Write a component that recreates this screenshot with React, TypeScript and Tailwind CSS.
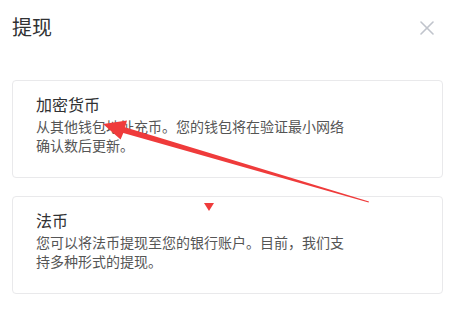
import React from "react";

// 提现方式のカード
const options = [
  {
    title: "加密货币",
    desc: "从其他钱包地址充币。您的钱包将在验证最小网络确认数后更新。",
  },
  {
    title: "法币",
    desc: "您可以将法币提现至您的银行账户。目前，我们支持多种形式的提现。",
  },
];

export default function App() {
  return (
    <div
      className="relative w-[450px] h-[332px] bg-white overflow-hidden"
      style={{ fontFamily: '"Noto Sans CJK SC", "Noto Sans", sans-serif' }}
    >
      {/* ヘッダー */}
      <div className="flex items-center justify-between pl-3 pr-[16px] pt-[13px] h-[41px]">
        <h1 className="text-[20px] leading-[28px] text-[#303133] font-normal">提现</h1>
        <button className="w-[14px] h-[14px] mt-[1px]">
          <svg viewBox="0 0 14 14" className="w-[14px] h-[14px]" stroke="#c0c4cc" strokeWidth="1.6" strokeLinecap="round">
            <line x1="1" y1="1" x2="13" y2="13" />
            <line x1="13" y1="1" x2="1" y2="13" />
          </svg>
        </button>
      </div>

      {/* カード一覧 */}
      <div className="flex flex-col gap-[18px] pl-3 pr-[7px] pt-[39px]">
        {options.map((o) => (
          <div
            key={o.title}
            className="border border-[#e9e9eb] rounded-[4px] pl-[23px] pt-[11px] pb-[23px] h-[98px]"
          >
            <p className="text-[16px] leading-[24px] text-[#303133]">{o.title}</p>
            <p className="text-[14px] leading-[19px] text-[#555] max-w-[316px] mt-[1px]">{o.desc}</p>
          </div>
        ))}
      </div>

      {/* 注釈の矢印 */}
      <svg className="absolute left-0 top-0 pointer-events-none" width="450" height="332" viewBox="0 0 450 332">
        <polygon
          points="103,124 127,120.5 125,127.3 369,201.6 368.6,202.6 123.3,133.1 120.6,139.5"
          fill="#ef3b3b"
        />
        <polygon points="204,203 214,203 209,211" fill="#ef3b3b" />
      </svg>
    </div>
  );
}
